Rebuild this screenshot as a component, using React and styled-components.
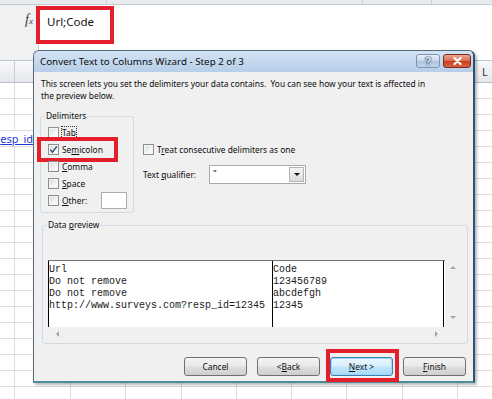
import React from "react";
import styled, { createGlobalStyle, css } from "styled-components";

const GlobalStyle = createGlobalStyle`
  html, body { margin: 0; padding: 0; background: #fff; }
  body { width: 492px; height: 399px; overflow: hidden; font-family: "Noto Sans", "Liberation Sans", sans-serif; }
  * { box-sizing: border-box; }
`;

const redFrame = css`
  content: "";
  position: absolute;
  border: 4px solid #e31f2b;
  pointer-events: none;
`;

const Screen = styled.div`
  position: relative;
  width: 492px;
  height: 399px;
  overflow: hidden;
  background: #fff;
  display: flex;
  flex-direction: column;
`;

const TopStrip = styled.div`
  height: 5px;
  flex: none;
  display: flex;
  background: #e8ebee;
  border-bottom: 1px solid #c6cbd1;
`;

const StripCell = styled.div`
  width: ${(p) => p.$w}px;
  flex: none;
  border-right: 1px solid #cdd2d8;
`;

const FormulaRow = styled.div`
  height: 56px;
  flex: none;
  display: flex;
  border-bottom: 1px solid #c3c7cc;
`;

const NameArea = styled.div`
  width: 39px;
  flex: none;
  background: #f0f1f2;
  border-right: 1px solid #c8ccd0;
  display: flex;
  justify-content: flex-end;
  align-items: flex-start;
  padding: 7px 5px 0 0;
`;

const Fx = styled.span`
  font-family: "Liberation Serif", serif;
  font-style: italic;
  font-size: 14px;
  line-height: 15px;
  color: #3c3c3c;
  sub {
    font-size: 9px;
    vertical-align: baseline;
  }
`;

const FormulaInput = styled.div`
  flex: 1;
  background: #fff;
  padding: 4px 0 0 8px;
`;

const FormulaText = styled.span`
  position: relative;
  display: inline-block;
  font-size: 11.5px;
  line-height: 16px;
  color: #111;
  &::after {
    ${redFrame};
    top: -8px;
    left: -11px;
    width: 70px;
    height: 30px;
  }
`;

const ColumnHeader = styled.div`
  height: 22px;
  flex: none;
  display: flex;
  background: linear-gradient(#f8f9fa, #e4e7eb);
  border-bottom: 1px solid #b9bfc7;
`;

const HeaderCell = styled.div`
  width: ${(p) => p.$w}px;
  flex: none;
  border-right: 1px solid #c9cdd2;
  display: flex;
  align-items: center;
  justify-content: center;
  font-size: 11px;
  color: #3a3a3a;
`;

const GridRow = styled.div`
  height: 16px;
  flex: none;
  display: flex;
`;

const Cell = styled.div`
  width: ${(p) => p.$w}px;
  flex: none;
  border-right: 1px solid #dadcdf;
  border-bottom: 1px solid #dadcdf;
`;

const LinkCell = styled.div`
  width: ${(p) => p.$w}px;
  flex: none;
  display: flex;
  justify-content: flex-end;
  align-items: center;
  border-bottom: 1px solid #dadcdf;
  font-size: 11px;
  line-height: 15px;
  white-space: nowrap;
  color: #1d36d6;
  text-decoration: underline;
`;

/* ---------------- Dialog ---------------- */

const Dialog = styled.div`
  position: absolute;
  left: 33px;
  top: 50px;
  width: 442px;
  display: flex;
  flex-direction: column;
  background: #f0f0f0;
  border: 1px solid #56697d;
  border-right: 2px solid #2b5274;
  border-bottom: 2px solid #4a8e9b;
  border-radius: 6px 6px 0 0;
  box-shadow: 2px 2px 3px rgba(0, 0, 0, 0.28);
`;

const TitleBar = styled.div`
  height: 21px;
  display: flex;
  align-items: flex-start;
  padding: 0 2px 0 6px;
  background: linear-gradient(#d3e3f4, #b7cee9);
  border-radius: 5px 5px 0 0;
`;

const TitleText = styled.div`
  flex: 1;
  font-size: 9.8px;
  line-height: 22px;
  color: #0b0b0b;
`;

const CaptionButtons = styled.div`
  display: flex;
  gap: 3px;
  margin-top: 3px;
`;

const CaptionButton = styled.div`
  width: ${(p) => p.$w}px;
  height: 14px;
  border-radius: 3px;
  display: flex;
  align-items: center;
  justify-content: center;
  font-family: "Liberation Sans", sans-serif;
  font-size: 11px;
  font-weight: bold;
  line-height: 12px;
  ${(p) =>
    p.$close
      ? css`
          border: 1px solid #7d2b1f;
          background: linear-gradient(#eba792, #dc6c50 48%, #c63e22 52%, #d8643f);
        `
      : css`
          border: 1px solid #7c94ae;
          background: linear-gradient(#e9f0f8, #c9d8ea 48%, #adc3dd 52%, #c3d5ea);
          color: #eef4fa;
          text-shadow: 0 0 1px #1f4068, 0 0 1px #1f4068, 0 0 2px #1f4068;
        `}
`;

const Body = styled.div`
  display: flex;
  flex-direction: column;
  padding: 6px 7px 5px 7px;
  font-size: 8.4px;
  color: #0c0c0c;
`;

const Description = styled.p`
  margin: 0;
  line-height: 12px;
`;

const OptionsRow = styled.div`
  display: flex;
  gap: 9px;
  margin-top: 14px;
`;

const GroupBox = styled.div`
  display: flex;
  flex-direction: column;
  width: ${(p) => p.$w}px;
  height: ${(p) => p.$h}px;
  margin-left: ${(p) => p.$ml}px;
  margin-top: ${(p) => p.$mt || 0}px;
  border: 1px solid #d3dbe2;
  border-radius: 3px;
  flex: none;
`;

const Legend = styled.div`
  align-self: flex-start;
  margin: -7px 0 0 4px;
  padding: 0 1px;
  line-height: 12px;
  background: #f0f0f0;
`;

const CheckList = styled.div`
  display: flex;
  flex-direction: column;
  padding: 2px 0 0 7px;
`;

const CheckRow = styled.div`
  position: relative;
  display: flex;
  align-items: center;
  gap: 3px;
  height: ${(p) => p.$h || 17}px;
  white-space: nowrap;
  ${(p) =>
    p.$highlight &&
    css`
      &::after {
        ${redFrame};
        top: -4px;
        bottom: -4px;
        left: -11px;
        width: 73px;
      }
    `}
`;

const Box = styled.span`
  width: 11px;
  height: 11px;
  flex: none;
  border: 1px solid #8e8f8f;
  background: linear-gradient(135deg, #d9dadb, #f7f7f7 70%, #ffffff);
  box-shadow: inset 0 0 0 1px #f4f4f4;
  display: flex;
  align-items: center;
  justify-content: center;
`;

const Label = styled.span`
  line-height: 11px;
  ${(p) =>
    p.$focus &&
    css`
      outline: 1px dotted #333;
      outline-offset: 0px;
    `}
`;

const SmallInput = styled.span`
  width: 26px;
  height: 17px;
  margin-left: 11px;
  background: #fff;
  border: 1px solid #abadb3;
`;

const RightOptions = styled.div`
  display: flex;
  flex-direction: column;
  padding-top: 27px;
`;

const QualifierRow = styled.div`
  display: flex;
  align-items: center;
  margin-top: 10px;
`;

const QualifierLabel = styled.span`
  width: 66px;
  flex: none;
`;

const Dropdown = styled.div`
  width: 97px;
  height: 19px;
  display: flex;
  background: #fff;
  border: 1px solid #a5acb5;
`;

const DropValue = styled.span`
  flex: 1;
  padding-left: 3px;
  line-height: 15px;
  font-size: 9px;
`;

const DropArrow = styled.span`
  width: 15px;
  margin: 1px;
  border: 1px solid #b4b4b4;
  background: linear-gradient(#f4f4f4, #dcdcdc);
  display: flex;
  align-items: center;
  justify-content: center;
  &::before {
    content: "";
    border-left: 3px solid transparent;
    border-right: 3px solid transparent;
    border-top: 3px solid #111;
  }
`;

const PreviewFrame = styled.div`
  display: grid;
  grid-template-columns: 397px 15px;
  grid-template-rows: 67px 13px;
  margin: 29px 0 0 5px;
`;

const PreviewArea = styled.div`
  display: flex;
  background: #fff;
  border-top: 1px solid #707070;
  overflow: hidden;
`;

const PreviewColumn = styled.div`
  width: ${(p) => p.$w}px;
  flex: none;
  border-left: 1px solid #000;
  border-right: ${(p) => (p.$last ? "1px solid #000" : "none")};
  padding-top: 3px;
  font-family: "Liberation Mono", "DejaVu Sans Mono", monospace;
  font-size: 10px;
  line-height: 12px;
  color: #1a1a1a;
  white-space: pre;
`;

const VScroll = styled.div`
  display: flex;
  flex-direction: column;
  justify-content: space-between;
  align-items: center;
  padding: 6px 0 8px;
`;

const HScroll = styled.div`
  display: flex;
  justify-content: space-between;
  align-items: center;
  padding: 0 7px 0 8px;
`;

const Arrow = styled.span`
  width: 0;
  height: 0;
  ${(p) =>
    p.$dir === "up" &&
    css`
      border-left: 3px solid transparent;
      border-right: 3px solid transparent;
      border-bottom: 3px solid #a4a4a4;
    `}
  ${(p) =>
    p.$dir === "down" &&
    css`
      border-left: 3px solid transparent;
      border-right: 3px solid transparent;
      border-top: 3px solid #a4a4a4;
    `}
  ${(p) =>
    p.$dir === "left" &&
    css`
      border-top: 3px solid transparent;
      border-bottom: 3px solid transparent;
      border-right: 3px solid #a4a4a4;
    `}
  ${(p) =>
    p.$dir === "right" &&
    css`
      border-top: 3px solid transparent;
      border-bottom: 3px solid transparent;
      border-left: 3px solid #a4a4a4;
    `}
`;

const ButtonRow = styled.div`
  display: flex;
  justify-content: flex-end;
  gap: 10px;
  margin-top: 13px;
`;

const Button = styled.div`
  position: relative;
  width: 63px;
  height: 19px;
  display: flex;
  align-items: center;
  justify-content: center;
  border: 1px solid #707070;
  border-radius: 3px;
  background: linear-gradient(#f2f2f2, #ebebeb 45%, #dddddd 55%, #cfcfcf);
  font-size: 8.4px;
  color: #111;
  ${(p) =>
    p.$primary &&
    css`
      border-color: #3c7fb1;
      box-shadow: inset 0 0 0 1px #9fd7f4;
      background: linear-gradient(#eaf6fd, #d9f0fc 45%, #bee6fd 55%, #a7d9f5);
    `}
  ${(p) =>
    p.$highlight &&
    css`
      &::after {
        ${redFrame};
        top: -9px;
        bottom: -7px;
        left: -5px;
        right: -7px;
      }
    `}
`;

const CheckMark = () => (
  <svg width="9" height="9" viewBox="0 0 9 9">
    <path d="M1.3 4.6 L3.4 7.2 L7.8 1.4" stroke="#34507a" strokeWidth="1.5" fill="none" />
  </svg>
);

const CloseGlyph = () => (
  <svg width="9" height="8" viewBox="0 0 9 8">
    <path d="M1.5 1 L7.5 7 M7.5 1 L1.5 7" stroke="#fff" strokeWidth="2.2" strokeLinecap="round" />
  </svg>
);

const colWidths = [15, 56, 55, 56, 55, 55, 55, 56, 55, 55];

export default function App() {
  const rows = Array.from({ length: 20 }, (_, i) => i);
  return (
    <Screen>
      <GlobalStyle />
      <TopStrip>
        <StripCell $w={107} />
        <StripCell $w={256} />
        <StripCell $w={69} />
      </TopStrip>
      <FormulaRow>
        <NameArea>
          <Fx>
            f<sub>x</sub>
          </Fx>
        </NameArea>
        <FormulaInput>
          <FormulaText>Url;Code</FormulaText>
        </FormulaInput>
      </FormulaRow>
      <ColumnHeader>
        {colWidths.map((w, i) => (
          <HeaderCell key={i} $w={w}>
            {i === colWidths.length - 1 ? "L" : ""}
          </HeaderCell>
        ))}
      </ColumnHeader>
      {rows.map((r) =>
        r === 3 ? (
          <GridRow key={r}>
            <LinkCell $w={33}>esp_id</LinkCell>
            <Cell $w={38} />
            {colWidths.slice(2).map((w, i) => (
              <Cell key={i} $w={w} />
            ))}
          </GridRow>
        ) : (
          <GridRow key={r}>
            {colWidths.map((w, i) => (
              <Cell key={i} $w={w} />
            ))}
          </GridRow>
        )
      )}

      <Dialog>
        <TitleBar>
          <TitleText>Convert Text to Columns Wizard - Step 2 of 3</TitleText>
          <CaptionButtons>
            <CaptionButton $w={24}>?</CaptionButton>
            <CaptionButton $w={28} $close>
              <CloseGlyph />
            </CaptionButton>
          </CaptionButtons>
        </TitleBar>
        <Body>
          <Description>
            This screen lets you set the delimiters your data contains.&nbsp; You can see how your text is affected in
            <br />
            the preview below.
          </Description>
          <OptionsRow>
            <GroupBox $w={94} $h={97} $ml={-1}>
              <Legend>Delimiters</Legend>
              <CheckList>
                <CheckRow>
                  <Box />
                  <Label $focus>
                    <u>T</u>ab
                  </Label>
                </CheckRow>
                <CheckRow $highlight>
                  <Box>
                    <CheckMark />
                  </Box>
                  <Label>
                    Se<u>m</u>icolon
                  </Label>
                </CheckRow>
                <CheckRow>
                  <Box />
                  <Label>
                    <u>C</u>omma
                  </Label>
                </CheckRow>
                <CheckRow>
                  <Box />
                  <Label>
                    <u>S</u>pace
                  </Label>
                </CheckRow>
                <CheckRow>
                  <Box />
                  <Label>
                    <u>O</u>ther:
                  </Label>
                  <SmallInput />
                </CheckRow>
              </CheckList>
            </GroupBox>
            <RightOptions>
              <CheckRow $h={12}>
                <Box />
                <Label>
                  T<u>r</u>eat consecutive delimiters as one
                </Label>
              </CheckRow>
              <QualifierRow>
                <QualifierLabel>
                  Text <u>q</u>ualifier:
                </QualifierLabel>
                <Dropdown>
                  <DropValue>"</DropValue>
                  <DropArrow />
                </Dropdown>
              </QualifierRow>
            </RightOptions>
          </OptionsRow>

          <GroupBox $w={426} $h={119} $ml={1} $mt={12}>
            <Legend>
              Data <u>p</u>review
            </Legend>
            <PreviewFrame>
              <PreviewArea>
                <PreviewColumn $w={224}>
                  {"Url\nDo not remove\nDo not remove\nhttp://www.surveys.com?resp_id=12345"}
                </PreviewColumn>
                <PreviewColumn $w={172} $last>
                  {"Code\n123456789\nabcdefgh\n12345"}
                </PreviewColumn>
              </PreviewArea>
              <VScroll>
                <Arrow $dir="up" />
                <Arrow $dir="down" />
              </VScroll>
              <HScroll>
                <Arrow $dir="left" />
                <Arrow $dir="right" />
              </HScroll>
            </PreviewFrame>
          </GroupBox>

          <ButtonRow>
            <Button>Cancel</Button>
            <Button>
              &lt; <u>B</u>ack
            </Button>
            <Button $primary $highlight>
              <u>N</u>ext &gt;
            </Button>
            <Button>
              <u>F</u>inish
            </Button>
          </ButtonRow>
        </Body>
      </Dialog>
    </Screen>
  );
}
